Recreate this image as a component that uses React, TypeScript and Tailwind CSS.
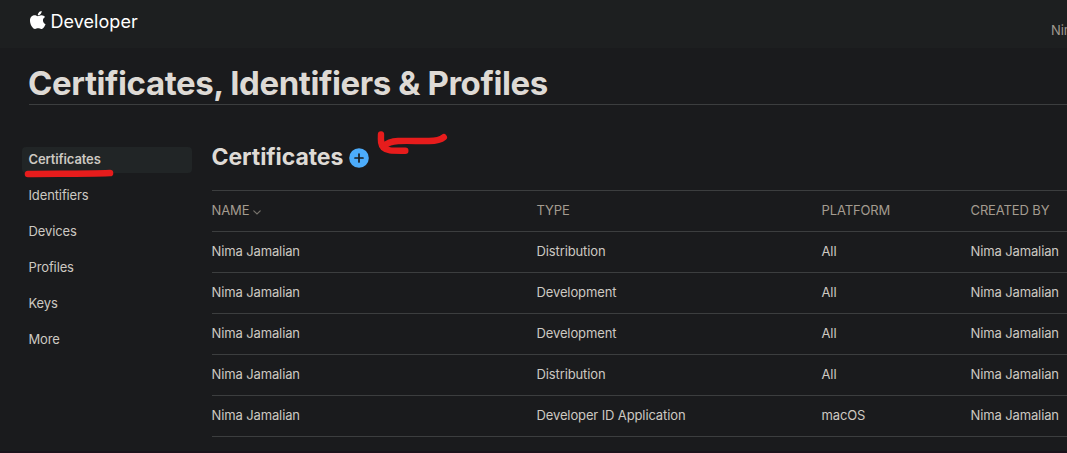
import React from "react";

const navItems = ["Certificates", "Identifiers", "Devices", "Profiles", "Keys", "More"];

const rows = [
  { type: "Distribution", platform: "All" },
  { type: "Development", platform: "All" },
  { type: "Development", platform: "All" },
  { type: "Distribution", platform: "All" },
  { type: "Developer ID Application", platform: "macOS" },
];

const columns = "grid grid-cols-[325px_285px_149px_200px] h-[41px] items-center border-b border-[#3c3e3f]";

export default function App() {
  return (
    <div className="flex h-[453px] w-[1067px] flex-col overflow-hidden border-b-2 border-[#1a121b] bg-[#1a1b1d] font-['Inter',sans-serif] text-[13px] tracking-[-0.12px] text-[#cdc9c2]">
      <header className="flex h-12 shrink-0 justify-between bg-[#1d1f20] pl-[30px]">
        <div className="flex h-[42px] items-center text-white">
          <svg className="mb-[3px] h-[18px] w-[15.5px]" viewBox="4 32 376 448" preserveAspectRatio="none" fill="currentColor">
            <path d="M318.7 268.7c-.2-36.7 16.4-64.4 50-84.8-18.8-26.9-47.2-41.7-84.7-44.6-35.5-2.8-74.3 20.7-88.5 20.7-15 0-49.4-19.7-76.4-19.7C63.3 141.2 4 184.8 4 273.5q0 39.3 14.4 81.2c12.8 36.7 59 126.7 107.2 125.2 25.2-.6 43-17.9 75.8-17.9 31.8 0 48.3 17.9 76.4 17.9 48.6-.7 90.4-82.5 102.6-119.3-65.2-30.7-61.7-90-61.7-91.9zm-56.6-164.2c27.3-32.4 24.8-61.9 24-72.5-24.1 1.4-52 16.4-67.9 34.9-17.5 19.8-27.8 44.3-25.6 71.9 26.1 2 49.9-11.4 69.5-34.3z" />
          </svg>
          <span className="ml-[5px] text-[18px] tracking-[0.05px]">Developer</span>
        </div>
        <div className="w-4 overflow-hidden pt-[21px] whitespace-nowrap text-[#a09a90]">Nima Jamalian</div>
      </header>
      <div className="ml-[29px] h-[57px] shrink-0 border-b border-[#3c3e3f] pt-[15px]">
        <h1 className="-ml-px text-[33px] leading-[40px] font-bold tracking-[-0.42px] whitespace-nowrap text-[#dedad5]">
          Certificates, Identifiers &amp; Profiles
        </h1>
      </div>
      <div className="flex pl-[22px]">
        <nav className="mt-[42px] flex w-[170px] shrink-0 flex-col gap-[10px]">
          {navItems.map((item, i) => (
            <a
              key={item}
              className={
                i === 0
                  ? "relative flex h-[26px] items-center rounded bg-[#212526] pl-[6.5px] font-semibold"
                  : "flex h-[26px] items-center pl-[6.5px]"
              }
            >
              {item}
              {i === 0 && (
                <svg className="absolute top-[20px] left-0 h-[12px] w-[96px]" viewBox="0 0 96 12" fill="none">
                  <path d="M6 7 C30 6.5 60 7 88 6" stroke="#e71c1c" strokeWidth="6.6" strokeLinecap="round" />
                </svg>
              )}
            </a>
          ))}
        </nav>
        <main className="ml-[19.5px] w-[900px] shrink-0">
          <div className="relative flex h-[86px] items-start border-b border-[#3c3e3f] pt-[37px]">
            <h2 className="text-[23px] leading-[30px] font-bold tracking-[-0.08px] text-[#dedad5]">Certificates</h2>
            <svg className="mt-[6px] ml-[5.5px] size-5" viewBox="0 0 20 20">
              <circle cx="10" cy="10" r="9.8" fill="#4cacfb" />
              <path d="M10 6v8M6 10h8" stroke="#1a1b1d" strokeWidth="1.7" strokeLinecap="round" />
            </svg>
            <svg className="absolute top-[24px] left-[160px] h-[36px] w-[90px]" viewBox="0 0 90 36" fill="none">
              <path
                d="M9 5.5 C8.7 12 8.8 16 11.5 18.7 C15 22 20 21.7 33.3 21.7 M11.5 17.5 C16 13 20 12.2 26 12 C37 11.6 47 12.2 57 12 C65 11.8 68.5 11 71.8 8.2"
                stroke="#e71c1c"
                strokeWidth="6.4"
                strokeLinecap="round"
                strokeLinejoin="round"
              />
            </svg>
          </div>
          <div className={`${columns} text-[#a49c90]`}>
            <span className="flex items-center">
              NAME
              <svg className="mt-[2px] ml-1 h-[5px] w-[8px]" viewBox="0 0 8 5" fill="none">
                <path d="M.8 .8 4 4 7.2 .8" stroke="#77736c" strokeWidth="1.2" strokeLinecap="round" />
              </svg>
            </span>
            <span>TYPE</span>
            <span>PLATFORM</span>
            <span>CREATED BY</span>
          </div>
          {rows.map((row, i) => (
            <div key={i} className={columns}>
              <span>Nima Jamalian</span>
              <span>{row.type}</span>
              <span>{row.platform}</span>
              <span>Nima Jamalian</span>
            </div>
          ))}
        </main>
      </div>
    </div>
  );
}
